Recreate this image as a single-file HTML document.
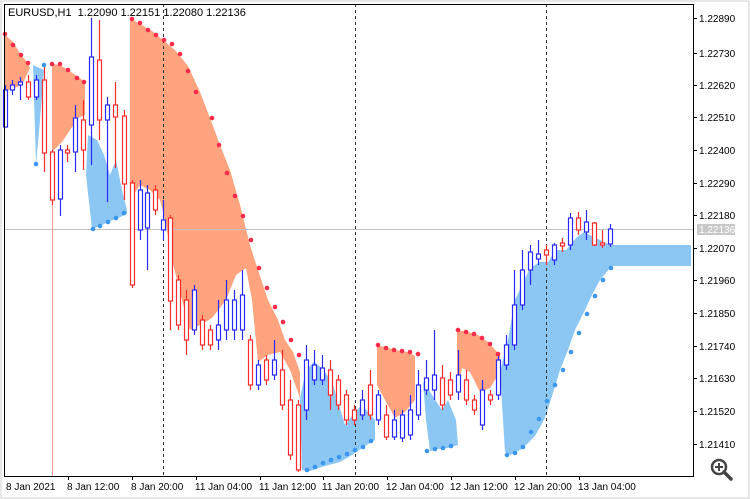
<!DOCTYPE html>
<html><head><meta charset="utf-8"><style>
body{margin:0;width:750px;height:499px;background:#fff;overflow:hidden;font-family:"Liberation Sans",sans-serif}
svg{position:absolute;left:0;top:0}
text{font-family:"Liberation Sans",sans-serif;font-size:11px;fill:#000}
</style></head><body>
<svg width="750" height="499" viewBox="0 0 750 499">
<rect x="0" y="0" width="750" height="499" fill="#fff"/>
<rect x="1" y="1" width="748" height="497" fill="none" stroke="#cfcfcf"/>
<!-- orange areas -->
<g fill="#FFA47E">
<polygon points="4,34 13,42 21,55 28,63 30,68 22,85 14,88 4,92"/>
<polygon points="52,64 60,65 68,70 77,76 85,82 85,115 78,118 70,130 62,142 52,152"/>
<polygon points="130,18 140,24 152,31 163,40 175,50 188,66 200,92 210,118 220,145 230,170 240,205 250,245 258,270 268,300 278,320 285,340 293,352 300,372 300,398 290,370 280,352 268,355 258,362 252,300 246,268 236,275 226,300 212,318 200,325 190,330 182,300 172,260 165,220 160,200 150,190 140,185 130,200"/>
<polygon points="377,345 388,348 400,351 408,352 415,356 415,400 405,412 395,418 385,400 377,385"/>
<polygon points="457,330 468,332 478,335 488,342 500,355 500,372 490,388 480,392 470,372 462,368 457,392"/>
</g>
<!-- blue areas -->
<g fill="#8CC6F2">
<polygon points="33,65 44,70 40,120 36,165"/>
<polygon points="88,135 97,140 104,155 110,175 116,160 122,190 127,210 127,214 118,218 108,222 100,226 92,229 86,175"/>
<polygon points="300,398 306,370 314,362 322,368 332,382 345,425 355,412 362,405 375,420 375,440 362,448 352,455 340,462 325,466 310,471 302,470"/>
<polygon points="423,382 432,395 442,410 448,400 456,420 458,445 448,448 438,449 430,451 426,420"/>
<polygon points="500,372 508,340 515,300 522,285 530,268 540,262 548,262 556,250 566,250 576,238 584,232 592,236 600,240 610,245 610,268 600,280 592,295 585,310 575,330 568,350 560,370 553,393 545,418 535,436 522,449 510,455 505,452"/>
<rect x="610" y="245" width="81" height="21"/>
</g>
<!-- grid lines -->
<g stroke="#333" stroke-width="1" stroke-dasharray="3,3">
<line x1="163.5" y1="4" x2="163.5" y2="476"/>
<line x1="355.5" y1="4" x2="355.5" y2="476"/>
<line x1="546.5" y1="4" x2="546.5" y2="476"/>
</g>
<line x1="4" y1="229.5" x2="693" y2="229.5" stroke="#c0c0c0"/>
<line x1="52.5" y1="200" x2="52.5" y2="476" stroke="#ff9a9a"/>
<!-- candles -->
<g id="c" fill="#fff" stroke-width="1.2">
<g stroke="#2828ff">
<line x1="5.5" y1="85" x2="5.5" y2="127"/><rect x="3.5" y="90" width="4" height="37"/>
<line x1="12.5" y1="80" x2="12.5" y2="95"/><rect x="10.5" y="85" width="4" height="5"/>
<line x1="20.5" y1="77" x2="20.5" y2="100"/><rect x="18.5" y="82" width="4" height="3"/>
<line x1="36.5" y1="75" x2="36.5" y2="100"/><rect x="34.5" y="80" width="4" height="17"/>
<line x1="60.5" y1="145" x2="60.5" y2="216"/><rect x="58.5" y="150" width="4" height="49"/>
<line x1="75.5" y1="105" x2="75.5" y2="172"/><rect x="73.5" y="118" width="4" height="34"/>
<line x1="91.5" y1="18" x2="91.5" y2="165"/><rect x="89.5" y="57" width="4" height="68"/>
<line x1="107.5" y1="97" x2="107.5" y2="202"/><rect x="105.5" y="105" width="4" height="15"/>
<line x1="140.5" y1="180" x2="140.5" y2="240"/><rect x="138.5" y="190" width="4" height="40"/>
<line x1="147.5" y1="185" x2="147.5" y2="270"/><rect x="145.5" y="193" width="4" height="35"/>
<line x1="163.5" y1="200" x2="163.5" y2="240"/><rect x="161.5" y="220" width="4" height="10"/>
<line x1="194.5" y1="285" x2="194.5" y2="335"/><rect x="192.5" y="290" width="4" height="40"/>
<line x1="218.5" y1="300" x2="218.5" y2="350"/><rect x="216.5" y="325" width="4" height="15"/>
<line x1="226.5" y1="280" x2="226.5" y2="340"/><rect x="224.5" y="300" width="4" height="30"/>
<line x1="234.5" y1="290" x2="234.5" y2="340"/><rect x="232.5" y="300" width="4" height="30"/>
<line x1="242.5" y1="270" x2="242.5" y2="340"/><rect x="240.5" y="295" width="4" height="35"/>
<line x1="258.5" y1="360" x2="258.5" y2="390"/><rect x="256.5" y="365" width="4" height="20"/>
<line x1="274.5" y1="340" x2="274.5" y2="380"/><rect x="272.5" y="360" width="4" height="15"/>
<line x1="306.5" y1="345" x2="306.5" y2="420"/><rect x="304.5" y="360" width="4" height="50"/>
<line x1="314.5" y1="350" x2="314.5" y2="385"/><rect x="312.5" y="365" width="4" height="15"/>
<line x1="322.5" y1="355" x2="322.5" y2="385"/><rect x="320.5" y="368" width="4" height="12"/>
<line x1="362.5" y1="390" x2="362.5" y2="420"/><rect x="360.5" y="400" width="4" height="15"/>
<line x1="378.5" y1="390" x2="378.5" y2="425"/><rect x="376.5" y="395" width="4" height="25"/>
<line x1="394.5" y1="410" x2="394.5" y2="440"/><rect x="392.5" y="420" width="4" height="17"/>
<line x1="402.5" y1="410" x2="402.5" y2="442"/><rect x="400.5" y="415" width="4" height="23"/>
<line x1="410.5" y1="395" x2="410.5" y2="440"/><rect x="408.5" y="410" width="4" height="25"/>
<line x1="418.5" y1="370" x2="418.5" y2="420"/><rect x="416.5" y="385" width="4" height="30"/>
<line x1="426.5" y1="360" x2="426.5" y2="395"/><rect x="424.5" y="378" width="4" height="12"/>
<line x1="434.5" y1="330" x2="434.5" y2="400"/><rect x="432.5" y="375" width="4" height="15"/>
<line x1="458.5" y1="350" x2="458.5" y2="400"/><rect x="456.5" y="375" width="4" height="17"/>
<line x1="482.5" y1="380" x2="482.5" y2="430"/><rect x="480.5" y="390" width="4" height="35"/>
<line x1="498.5" y1="355" x2="498.5" y2="400"/><rect x="496.5" y="360" width="4" height="35"/>
<line x1="506.5" y1="335" x2="506.5" y2="370"/><rect x="504.5" y="345" width="4" height="20"/>
<line x1="514.5" y1="270" x2="514.5" y2="350"/><rect x="512.5" y="305" width="4" height="40"/>
<line x1="522.5" y1="250" x2="522.5" y2="310"/><rect x="520.5" y="270" width="4" height="35"/>
<line x1="530.5" y1="245" x2="530.5" y2="285"/><rect x="528.5" y="252" width="4" height="18"/>
<line x1="538.5" y1="240" x2="538.5" y2="265"/><rect x="536.5" y="254" width="4" height="5"/>
<line x1="554.5" y1="243" x2="554.5" y2="265"/><rect x="552.5" y="245" width="4" height="15"/>
<line x1="570.5" y1="213" x2="570.5" y2="250"/><rect x="568.5" y="218" width="4" height="27"/>
<line x1="586.5" y1="210" x2="586.5" y2="240"/><rect x="584.5" y="222" width="4" height="10"/>
<line x1="610.5" y1="224" x2="610.5" y2="247"/><rect x="608.5" y="229" width="4" height="15"/>
</g>
<g stroke="#ff2a2a">
<line x1="28.5" y1="75" x2="28.5" y2="100"/><rect x="26.5" y="82" width="4" height="15"/>
<line x1="44.5" y1="65" x2="44.5" y2="172"/><rect x="42.5" y="80" width="4" height="73"/>
<line x1="52.5" y1="150" x2="52.5" y2="205"/><rect x="50.5" y="152" width="4" height="48"/>
<line x1="67.5" y1="145" x2="67.5" y2="162"/><rect x="65.5" y="150" width="4" height="3"/>
<line x1="83.5" y1="100" x2="83.5" y2="170"/><rect x="81.5" y="120" width="4" height="30"/>
<line x1="99.5" y1="20" x2="99.5" y2="140"/><rect x="97.5" y="60" width="4" height="60"/>
<line x1="115.5" y1="82" x2="115.5" y2="168"/><rect x="113.5" y="105" width="4" height="12"/>
<line x1="124.5" y1="110" x2="124.5" y2="200"/><rect x="122.5" y="116" width="4" height="68"/>
<line x1="132.5" y1="180" x2="132.5" y2="288"/><rect x="130.5" y="183" width="4" height="102"/>
<line x1="155.5" y1="185" x2="155.5" y2="215"/><rect x="153.5" y="190" width="4" height="20"/>
<line x1="170.5" y1="215" x2="170.5" y2="330"/><rect x="168.5" y="218" width="4" height="83"/>
<line x1="178.5" y1="275" x2="178.5" y2="330"/><rect x="176.5" y="280" width="4" height="45"/>
<line x1="186.5" y1="290" x2="186.5" y2="355"/><rect x="184.5" y="300" width="4" height="40"/>
<line x1="202.5" y1="315" x2="202.5" y2="350"/><rect x="200.5" y="320" width="4" height="25"/>
<line x1="210.5" y1="325" x2="210.5" y2="350"/><rect x="208.5" y="330" width="4" height="15"/>
<line x1="250.5" y1="335" x2="250.5" y2="390"/><rect x="248.5" y="340" width="4" height="45"/>
<line x1="266.5" y1="355" x2="266.5" y2="385"/><rect x="264.5" y="360" width="4" height="20"/>
<line x1="282.5" y1="350" x2="282.5" y2="410"/><rect x="280.5" y="370" width="4" height="35"/>
<line x1="290.5" y1="380" x2="290.5" y2="460"/><rect x="288.5" y="400" width="4" height="55"/>
<line x1="298.5" y1="400" x2="298.5" y2="472"/><rect x="296.5" y="405" width="4" height="65"/>
<line x1="330.5" y1="360" x2="330.5" y2="410"/><rect x="328.5" y="370" width="4" height="25"/>
<line x1="338.5" y1="375" x2="338.5" y2="410"/><rect x="336.5" y="380" width="4" height="25"/>
<line x1="346.5" y1="390" x2="346.5" y2="425"/><rect x="344.5" y="395" width="4" height="25"/>
<line x1="354.5" y1="405" x2="354.5" y2="425"/><rect x="352.5" y="410" width="4" height="10"/>
<line x1="370.5" y1="370" x2="370.5" y2="420"/><rect x="368.5" y="385" width="4" height="30"/>
<line x1="386.5" y1="405" x2="386.5" y2="440"/><rect x="384.5" y="415" width="4" height="22"/>
<line x1="442.5" y1="365" x2="442.5" y2="410"/><rect x="440.5" y="378" width="4" height="27"/>
<line x1="450.5" y1="372" x2="450.5" y2="400"/><rect x="448.5" y="380" width="4" height="15"/>
<line x1="466.5" y1="370" x2="466.5" y2="405"/><rect x="464.5" y="380" width="4" height="20"/>
<line x1="474.5" y1="395" x2="474.5" y2="415"/><rect x="472.5" y="400" width="4" height="10"/>
<line x1="490.5" y1="390" x2="490.5" y2="405"/><rect x="488.5" y="395" width="4" height="5"/>
<line x1="546.5" y1="245" x2="546.5" y2="265"/><rect x="544.5" y="250" width="4" height="5"/>
<line x1="562.5" y1="238" x2="562.5" y2="252"/><rect x="560.5" y="243" width="4" height="3"/>
<line x1="578.5" y1="212" x2="578.5" y2="235"/><rect x="576.5" y="218" width="4" height="12"/>
<line x1="594.5" y1="222" x2="594.5" y2="246"/><rect x="592.5" y="223" width="4" height="22"/>
<line x1="602.5" y1="230" x2="602.5" y2="248"/><rect x="600.5" y="243" width="4" height="2"/>
</g>
</g>
<!-- dots -->
<g fill="#ff2a4a">
<circle cx="5" cy="34" r="2.3"/><circle cx="13" cy="45" r="2.3"/><circle cx="21" cy="55" r="2.3"/><circle cx="28" cy="63" r="2.3"/>
<circle cx="52" cy="64" r="2.3"/><circle cx="60" cy="64" r="2.3"/><circle cx="68" cy="70" r="2.3"/><circle cx="77" cy="78" r="2.3"/><circle cx="84" cy="82" r="2.3"/>
<circle cx="132" cy="19" r="2.3"/><circle cx="140" cy="23" r="2.3"/><circle cx="148" cy="30" r="2.3"/><circle cx="156" cy="35" r="2.3"/><circle cx="164" cy="40" r="2.3"/><circle cx="172" cy="44" r="2.3"/><circle cx="180" cy="54" r="2.3"/><circle cx="188" cy="71" r="2.3"/><circle cx="196" cy="92" r="2.3"/><circle cx="212" cy="118" r="2.3"/><circle cx="219" cy="145" r="2.3"/><circle cx="227" cy="173" r="2.3"/><circle cx="235" cy="196" r="2.3"/><circle cx="243" cy="216" r="2.3"/><circle cx="251" cy="240" r="2.3"/><circle cx="259" cy="268" r="2.3"/><circle cx="267" cy="288" r="2.3"/><circle cx="275" cy="307" r="2.3"/><circle cx="283" cy="322" r="2.3"/><circle cx="291" cy="340" r="2.3"/><circle cx="299" cy="355" r="2.3"/>
<circle cx="378" cy="345" r="2.3"/><circle cx="386" cy="348" r="2.3"/><circle cx="394" cy="350" r="2.3"/><circle cx="402" cy="351" r="2.3"/><circle cx="410" cy="352" r="2.3"/><circle cx="418" cy="354" r="2.3"/>
<circle cx="458" cy="330" r="2.3"/><circle cx="466" cy="332" r="2.3"/><circle cx="474" cy="334" r="2.3"/><circle cx="482" cy="338" r="2.3"/><circle cx="490" cy="344" r="2.3"/><circle cx="498" cy="354" r="2.3"/>
</g>
<g fill="#3a96ee">
<circle cx="36" cy="164" r="2.3"/><circle cx="44" cy="65" r="2.3"/>
<circle cx="93" cy="229" r="2.3"/><circle cx="100" cy="226" r="2.3"/><circle cx="108" cy="222" r="2.3"/><circle cx="116" cy="218" r="2.3"/><circle cx="124" cy="213" r="2.3"/>
<circle cx="307" cy="470" r="2.3"/><circle cx="315" cy="467" r="2.3"/><circle cx="323" cy="463" r="2.3"/><circle cx="331" cy="460" r="2.3"/><circle cx="339" cy="457" r="2.3"/><circle cx="347" cy="454" r="2.3"/><circle cx="355" cy="450" r="2.3"/><circle cx="363" cy="447" r="2.3"/><circle cx="371" cy="441" r="2.3"/>
<circle cx="427" cy="451" r="2.3"/><circle cx="435" cy="449" r="2.3"/><circle cx="443" cy="448" r="2.3"/><circle cx="451" cy="446" r="2.3"/>
<circle cx="507" cy="455" r="2.3"/><circle cx="515" cy="453" r="2.3"/><circle cx="523" cy="447" r="2.3"/><circle cx="531" cy="432" r="2.3"/><circle cx="539" cy="419" r="2.3"/><circle cx="547" cy="401" r="2.3"/><circle cx="555" cy="385" r="2.3"/><circle cx="563" cy="370" r="2.3"/><circle cx="571" cy="352" r="2.3"/><circle cx="579" cy="333" r="2.3"/><circle cx="587" cy="314" r="2.3"/><circle cx="595" cy="296" r="2.3"/><circle cx="603" cy="280" r="2.3"/><circle cx="611" cy="268" r="2.3"/>
</g>
<!-- frame -->
<rect x="4.5" y="4.5" width="689" height="472" fill="none" stroke="#000"/>
<text x="8" y="16">EURUSD,H1&#160; 1.22090 1.22151 1.22080 1.22136</text>
<!-- right axis -->
<g stroke="#000">
<line x1="693" y1="18.5" x2="697" y2="18.5"/><line x1="693" y1="53.5" x2="697" y2="53.5"/><line x1="693" y1="85.5" x2="697" y2="85.5"/><line x1="693" y1="117.5" x2="697" y2="117.5"/><line x1="693" y1="150.5" x2="697" y2="150.5"/><line x1="693" y1="183.5" x2="697" y2="183.5"/><line x1="693" y1="215.5" x2="697" y2="215.5"/><line x1="693" y1="248.5" x2="697" y2="248.5"/><line x1="693" y1="280.5" x2="697" y2="280.5"/><line x1="693" y1="313.5" x2="697" y2="313.5"/><line x1="693" y1="346.5" x2="697" y2="346.5"/><line x1="693" y1="378.5" x2="697" y2="378.5"/><line x1="693" y1="411.5" x2="697" y2="411.5"/><line x1="693" y1="444.5" x2="697" y2="444.5"/>
</g>
<g font-size="10">
<text x="699" y="22" style="font-size:10px">1.22890</text>
<text x="699" y="57" style="font-size:10px">1.22730</text>
<text x="699" y="89" style="font-size:10px">1.22620</text>
<text x="699" y="121" style="font-size:10px">1.22510</text>
<text x="699" y="154" style="font-size:10px">1.22400</text>
<text x="699" y="187" style="font-size:10px">1.22290</text>
<text x="699" y="219" style="font-size:10px">1.22180</text>
<text x="699" y="252" style="font-size:10px">1.22070</text>
<text x="699" y="284" style="font-size:10px">1.21960</text>
<text x="699" y="317" style="font-size:10px">1.21850</text>
<text x="699" y="350" style="font-size:10px">1.21740</text>
<text x="699" y="382" style="font-size:10px">1.21630</text>
<text x="699" y="415" style="font-size:10px">1.21520</text>
<text x="699" y="448" style="font-size:10px">1.21410</text>
</g>
<rect x="697" y="224" width="38" height="11" fill="#c8c8c8"/>
<text x="699" y="233" style="font-size:10px;fill:#fff">1.22136</text>
<!-- bottom axis -->
<g stroke="#000">
<line x1="68.5" y1="476" x2="68.5" y2="480"/><line x1="132.5" y1="476" x2="132.5" y2="480"/><line x1="196.5" y1="476" x2="196.5" y2="480"/><line x1="260.5" y1="476" x2="260.5" y2="480"/><line x1="323.5" y1="476" x2="323.5" y2="480"/><line x1="387.5" y1="476" x2="387.5" y2="480"/><line x1="451.5" y1="476" x2="451.5" y2="480"/><line x1="515.5" y1="476" x2="515.5" y2="480"/><line x1="579.5" y1="476" x2="579.5" y2="480"/>
</g>
<g>
<text x="6" y="490" style="font-size:10px">8 Jan 2021</text>
<text x="67" y="490" style="font-size:10px">8 Jan 12:00</text>
<text x="131" y="490" style="font-size:10px">8 Jan 20:00</text>
<text x="195" y="490" style="font-size:10px">11 Jan 04:00</text>
<text x="259" y="490" style="font-size:10px">11 Jan 12:00</text>
<text x="322" y="490" style="font-size:10px">11 Jan 20:00</text>
<text x="386" y="490" style="font-size:10px">12 Jan 04:00</text>
<text x="450" y="490" style="font-size:10px">12 Jan 12:00</text>
<text x="514" y="490" style="font-size:10px">12 Jan 20:00</text>
<text x="578" y="490" style="font-size:10px">13 Jan 04:00</text>
</g>
<!-- zoom icon -->
<circle cx="719" cy="467" r="7" fill="none" stroke="#444" stroke-width="2.5"/>
<line x1="724" y1="472" x2="731" y2="479" stroke="#444" stroke-width="3.5" stroke-linecap="round"/>
<line x1="715" y1="467" x2="723" y2="467" stroke="#444" stroke-width="2"/>
<line x1="719" y1="463" x2="719" y2="471" stroke="#444" stroke-width="2"/>
</svg>
</body></html>
